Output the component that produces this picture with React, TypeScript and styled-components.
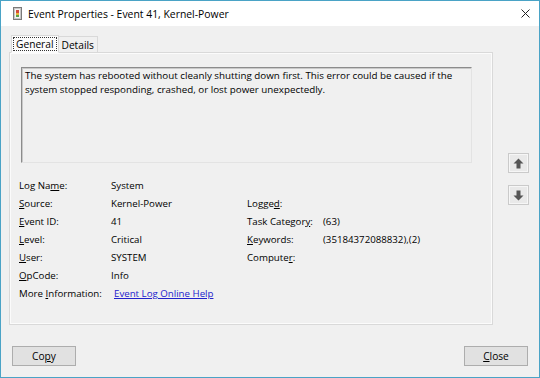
import React from "react";
import styled, { createGlobalStyle } from "styled-components";

const GlobalStyle = createGlobalStyle`
    html, body {
        margin: 0;
        padding: 0;
        background: #f0f0f0;
    }
    * {
        box-sizing: border-box;
    }
`;

const FONT = `"Open Sans", "Noto Sans", sans-serif`;

const Window = styled.div`
    width: 540px;
    height: 378px;
    border: 1px solid #4aa3c6;
    background: #f0f0f0;
    display: flex;
    flex-direction: column;
    font-family: ${FONT};
    font-size: 9.7px;
    color: #000;
    overflow: hidden;
`;

const TitleBar = styled.div`
    height: 25px;
    background: #fff;
    display: flex;
    align-items: center;
    padding: 0 9px 0 12px;
    flex-shrink: 0;
`;

const TitleText = styled.div`
    margin-left: 6px;
    flex: 1;
    font-size: 10.4px;
    color: #000;
`;

const CloseGlyph = styled.svg`
    width: 9px;
    height: 9px;
`;

const Body = styled.div`
    flex: 1;
    display: flex;
    flex-direction: column;
    padding: 8px 0 0 8px;
`;

const TabStrip = styled.div`
    display: flex;
    align-items: flex-end;
    height: 18px;
    padding-left: 2px;
`;

const Tab = styled.div<{ active?: boolean }>`
    height: ${p => (p.active ? "18px" : "16px")};
    padding: ${p => (p.active ? "2px 1px" : "0 3px")};
    display: flex;
    align-items: center;
    background: ${p => (p.active ? "#fcfcfc" : "#f0f0f0")};
    border: 1px solid #d9d9d9;
    border-left: ${p => (p.active ? "1px solid #d9d9d9" : "none")};
    border-bottom: ${p => (p.active ? "1px solid #fcfcfc" : "none")};
    margin-bottom: ${p => (p.active ? "-1px" : "0")};
    position: relative;
    z-index: ${p => (p.active ? 1 : 0)};
    font-size: 10.2px;
`;

const FocusRect = styled.span`
    border: 1px dotted #333;
    padding: 0 2px;
    line-height: 12px;
`;

const MainRow = styled.div`
    display: flex;
    align-items: flex-start;
`;

const TabPanel = styled.div`
    width: 484px;
    height: 273px;
    border: 1px solid #d9d9d9;
    box-shadow: inset 0 0 0 1px #fbfbfb;
    padding: 14px 0 0 11px;
    display: flex;
    flex-direction: column;
`;

const Description = styled.div`
    width: 451px;
    height: 96px;
    border-top: 1px solid #8c8c8c;
    border-left: 1px solid #8c8c8c;
    border-right: 1px solid #e3e3e3;
    border-bottom: 1px solid #e3e3e3;
    box-shadow: inset 1px 1px 0 #c9c9c9;
    padding: 1px 3px;
    line-height: 14px;
    font-size: 9.8px;
`;

const Grid = styled.div`
    margin: 13px 0 0 -2px;
    display: grid;
    grid-template-columns: 92px 136px 76px 1fr;
    grid-auto-rows: 18px;
    align-items: center;
`;

const Label = styled.div`
    white-space: nowrap;
`;

const Value = styled.div`
    white-space: nowrap;
`;

const Key = styled.span`
    text-decoration: underline;
    text-underline-offset: 1px;
`;

const Link = styled.a`
    color: #2222cc;
    text-decoration: underline;
    margin-left: 3px;
    white-space: nowrap;
`;

const SideColumn = styled.div`
    display: flex;
    flex-direction: column;
    gap: 12px;
    margin: 101px 0 0 15px;
`;

const ArrowButton = styled.div`
    width: 21px;
    height: 20px;
    border: 1px solid #cacaca;
    background: #e9e9e9;
    box-shadow: inset 0 0 0 1px #f6f6f6;
    display: flex;
    align-items: center;
    justify-content: center;
`;

const Footer = styled.div`
    display: flex;
    justify-content: space-between;
    padding: 21px 11px 0 3px;
`;

const Button = styled.div`
    width: 64px;
    height: 20px;
    border: 1px solid #adadad;
    background: #e1e1e1;
    display: flex;
    align-items: center;
    justify-content: center;
    font-size: 10.2px;
`;

const EventIcon = () => (
    <svg width="9" height="13" viewBox="0 0 9 13">
        <rect x="0.5" y="0.5" width="8" height="12" fill="#c8c8c8" stroke="#7a7a7a" />
        <rect x="2" y="2" width="5" height="9" fill="#f4f4f4" />
        <rect x="3" y="3" width="3" height="3" fill="#d24b3a" />
        <rect x="3" y="6" width="3" height="2" fill="#e8b43a" />
        <rect x="3" y="8" width="3" height="2" fill="#5aa04a" />
    </svg>
);

const UpArrow = () => (
    <svg width="11" height="11" viewBox="0 0 11 11">
        <path d="M5.5 0.5 L10.5 5.5 L7.5 5.5 L7.5 10.5 L3.5 10.5 L3.5 5.5 L0.5 5.5 Z" fill="#555" />
    </svg>
);

const DownArrow = () => (
    <svg width="11" height="11" viewBox="0 0 11 11">
        <path d="M5.5 10.5 L10.5 5.5 L7.5 5.5 L7.5 0.5 L3.5 0.5 L3.5 5.5 L0.5 5.5 Z" fill="#555" />
    </svg>
);

const App = () => {
    return (
        <>
            <GlobalStyle />
            <Window>
                <TitleBar>
                    <EventIcon />
                    <TitleText>Event Properties - Event 41, Kernel-Power</TitleText>
                    <CloseGlyph viewBox="0 0 9 9">
                        <path d="M0.5 0.5 L8.5 8.5 M8.5 0.5 L0.5 8.5" stroke="#222" strokeWidth="1" />
                    </CloseGlyph>
                </TitleBar>
                <Body>
                    <TabStrip>
                        <Tab active>
                            <FocusRect>General</FocusRect>
                        </Tab>
                        <Tab>Details</Tab>
                    </TabStrip>
                    <MainRow>
                        <TabPanel>
                            <Description>
                                The system has rebooted without cleanly shutting down first. This error could be caused if the
                                system stopped responding, crashed, or lost power unexpectedly.
                            </Description>
                            <Grid>
                                <Label>Log Na<Key>m</Key>e:</Label>
                                <Value>System</Value>
                                <Label />
                                <Value />

                                <Label><Key>S</Key>ource:</Label>
                                <Value>Kernel-Power</Value>
                                <Label>Logge<Key>d</Key>:</Label>
                                <Value />

                                <Label><Key>E</Key>vent ID:</Label>
                                <Value>41</Value>
                                <Label>Task Categor<Key>y</Key>:</Label>
                                <Value>(63)</Value>

                                <Label><Key>L</Key>evel:</Label>
                                <Value>Critical</Value>
                                <Label><Key>K</Key>eywords:</Label>
                                <Value>(35184372088832),(2)</Value>

                                <Label><Key>U</Key>ser:</Label>
                                <Value>SYSTEM</Value>
                                <Label>Compute<Key>r</Key>:</Label>
                                <Value />

                                <Label><Key>O</Key>pCode:</Label>
                                <Value>Info</Value>
                                <Label />
                                <Value />

                                <Label>More <Key>I</Key>nformation:</Label>
                                <Value><Link>Event Log Online Help</Link></Value>
                            </Grid>
                        </TabPanel>
                        <SideColumn>
                            <ArrowButton><UpArrow /></ArrowButton>
                            <ArrowButton><DownArrow /></ArrowButton>
                        </SideColumn>
                    </MainRow>
                    <Footer>
                        <Button>Co<Key>p</Key>y</Button>
                        <Button><Key>C</Key>lose</Button>
                    </Footer>
                </Body>
            </Window>
        </>
    );
};

export default App;
